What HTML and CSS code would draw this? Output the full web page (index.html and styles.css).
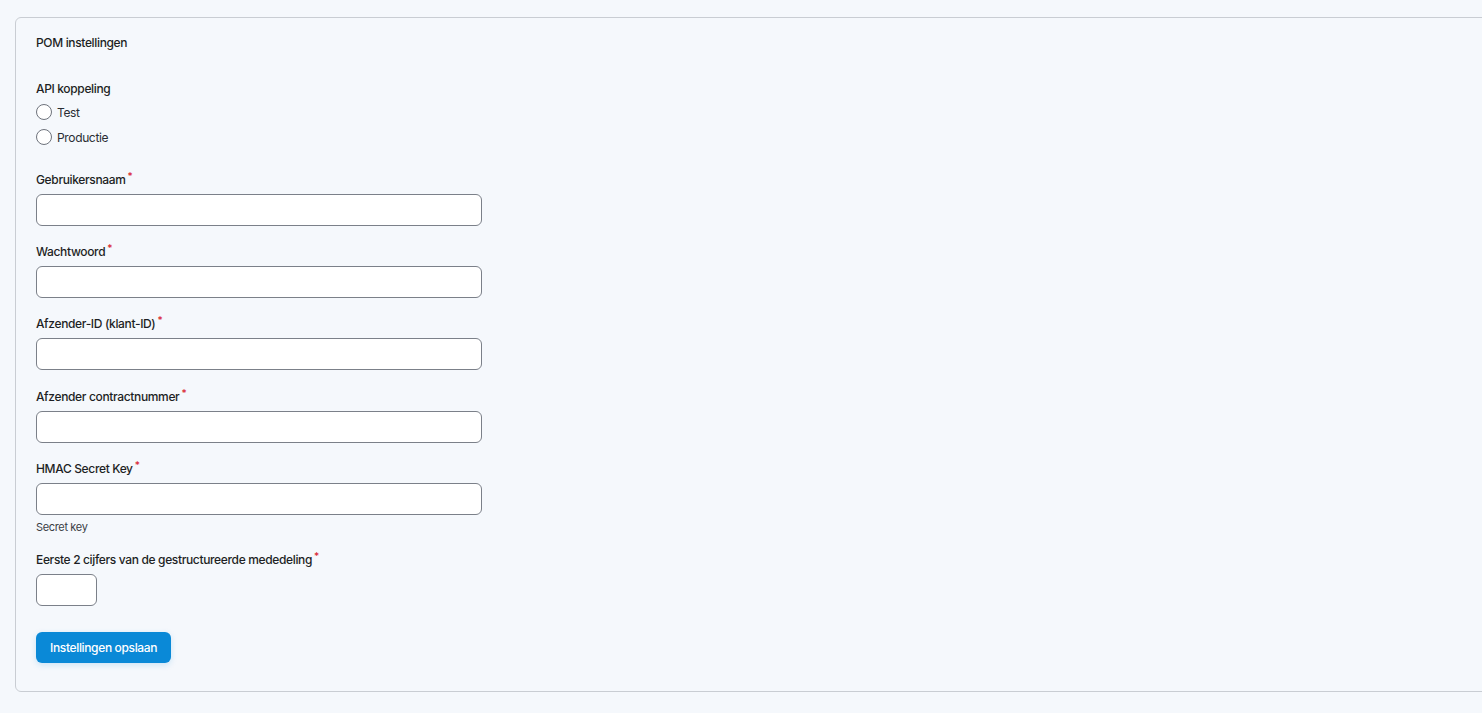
FILE: index.html
```html
<!DOCTYPE html>
<html lang="nl">
<head>
<meta charset="utf-8">
<title>POM instellingen</title>
<link rel="stylesheet" href="styles.css">
</head>
<body>
<div class="page">
  <form class="card">
    <h2 class="card-title">POM instellingen</h2>

    <div class="radio-group">
      <div class="label">API koppeling</div>
      <label class="radio-row"><input type="radio" name="api" class="radio"><span>Test</span></label>
      <label class="radio-row"><input type="radio" name="api" class="radio"><span>Productie</span></label>
    </div>

    <div class="field">
      <label class="label">Gebruikersnaam<span class="req">*</span></label>
      <input class="input" type="text">
    </div>
    <div class="field">
      <label class="label">Wachtwoord<span class="req">*</span></label>
      <input class="input" type="password">
    </div>
    <div class="field">
      <label class="label">Afzender-ID (klant-ID)<span class="req">*</span></label>
      <input class="input" type="text">
    </div>
    <div class="field field-wide">
      <label class="label">Afzender contractnummer<span class="req">*</span></label>
      <input class="input" type="text">
    </div>
    <div class="field">
      <label class="label">HMAC Secret Key<span class="req">*</span></label>
      <input class="input" type="text">
      <div class="help">Secret key</div>
    </div>
    <div class="field">
      <label class="label">Eerste 2 cijfers van de gestructureerde mededeling<span class="req">*</span></label>
      <input class="input input-short" type="text">
    </div>

    <div class="actions">
      <button type="button" class="btn">Instellingen opslaan</button>
    </div>
  </form>
</div>
</body>
</html>
```

FILE: styles.css
```css
html, body {
  margin: 0;
  padding: 0;
  background: #f5f8fc;
  overflow: hidden;
}
body {
  font-family: Inter, "Noto Sans", "Liberation Sans", sans-serif;
  font-size: 12px;
  letter-spacing: -0.35px;
  color: #1d1f24;
}
.page {
  padding: 17px 0 0 15px;
}
.card {
  width: 1500px;
  border: 1px solid #c9cdd3;
  border-radius: 6px;
  padding: 17px 20px 28px 20px;
  display: flex;
  flex-direction: column;
  box-sizing: border-box;
}
.card-title {
  margin: 0;
  font-size: 12px;
  font-weight: 500;
  line-height: 16px;
}
.radio-group {
  margin-top: 30px;
  display: flex;
  flex-direction: column;
  gap: 5px;
}
.label {
  display: block;
  font-weight: 500;
  line-height: 16px;
  height: 16px;
}
.radio-row {
  display: flex;
  align-items: center;
  gap: 5px;
  height: 20px;
  color: #2a2d33;
}
.radio {
  appearance: none;
  -webkit-appearance: none;
  margin: 0;
  width: 16px;
  height: 16px;
  border: 1px solid #6e737c;
  border-radius: 50%;
  background: #fff;
  box-sizing: border-box;
}
.field {
  display: flex;
  flex-direction: column;
  align-items: flex-start;
  gap: 6px;
  margin-top: 18px;
}
.field-wide {
  margin-top: 19px;
}
.radio-group + .field {
  margin-top: 25px;
}
.req {
  color: #d9242f;
  margin-left: 2px;
  font-size: 10px;
  line-height: 0;
  position: relative;
  top: -4px;
}
.input {
  width: 446px;
  height: 32px;
  box-sizing: border-box;
  border: 1px solid #7b8089;
  border-radius: 6px;
  background: #fff;
  margin: 0;
  font: inherit;
  padding: 0 8px;
}
.input-short {
  width: 61px;
}
.help {
  margin-top: -1px;
  font-size: 11px;
  line-height: 14px;
  color: #3a3d44;
}
.actions {
  margin-top: 26px;
}
.btn {
  height: 31px;
  padding: 0 14px;
  border: none;
  border-radius: 6px;
  background: #0a89d7;
  color: #fff;
  font: inherit;
  font-weight: 500;
  letter-spacing: -0.35px;
  box-shadow: 0 2px 6px rgba(10, 137, 215, 0.18);
}
```
